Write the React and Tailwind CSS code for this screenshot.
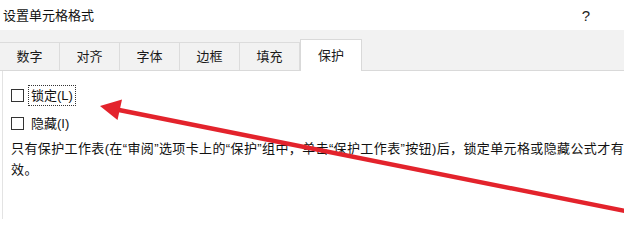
import React from "react";

function Tab({ label, selected }) {
  if (selected) {
    return (
      <div className="w-[62px] h-[32px] -mb-px bg-white border-t border-l border-r border-[#d9d9d9] flex items-center justify-center text-[13px] text-[#1a1a1a]">
        {label}
      </div>
    );
  }
  return (
    <div className="w-[60px] h-[28px] border-t border-r border-[#dcdcdc] flex items-center justify-center text-[13px] text-[#1a1a1a]">
      {label}
    </div>
  );
}

export default function App() {
  return (
    <div className="relative w-[624px] h-[219px] overflow-hidden bg-white text-[#111] font-['Liberation_Sans','Noto_Sans_CJK_SC',sans-serif]">
      <div className="h-[30px] flex items-center justify-between pl-[3px] pr-[34px]">
        <span className="text-[13px] leading-none">设置单元格格式</span>
        <span className="text-[15px] leading-none text-[#222]">?</span>
      </div>
      <div className="h-[41px] bg-[#f2f2f2] border-b border-[#d9d9d9] flex items-end">
        <Tab label="数字" />
        <Tab label="对齐" />
        <Tab label="字体" />
        <Tab label="边框" />
        <Tab label="填充" />
        <Tab label="保护" selected />
      </div>
      <div className="ml-[2px] border-l border-[#e3e3e3] h-[148px] pl-[8px] pt-[14px]">
        <div className="flex items-center h-[21px]">
          <div className="w-[13px] h-[13px] border border-[#333] bg-white" />
          <span className="ml-[4px] h-[21px] px-[2px] flex items-center text-[13px] border border-dotted border-[#333]">
            锁定(L)
          </span>
        </div>
        <div className="flex items-center h-[21px] mt-[7px]">
          <div className="w-[13px] h-[13px] border border-[#333] bg-white" />
          <span className="ml-[7px] text-[13px]">隐藏(I)</span>
        </div>
        <p className="mt-[4px] w-[622px] text-[13px] leading-[21px] tracking-[0.38px]">
          只有保护工作表(在“审阅”选项卡上的“保护”组中，单击“保护工作表”按钮)后，锁定单元格或隐藏公式才有效。
        </p>
      </div>
      <svg className="absolute left-0 top-0" width="624" height="219" viewBox="0 0 624 219">
        <line x1="630" y1="212" x2="114" y2="109" stroke="#e3232c" strokeWidth="4.5" strokeLinecap="round" />
        <polygon points="100,106 122,99.5 117.5,120" fill="#e3232c" />
      </svg>
    </div>
  );
}
